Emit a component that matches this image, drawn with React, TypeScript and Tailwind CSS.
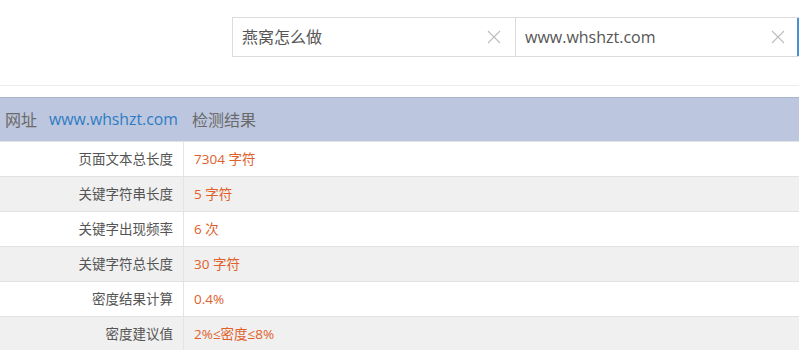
import React from "react";

const rows: [string, string][] = [
  ["页面文本总长度", "7304 字符"],
  ["关键字符串长度", "5 字符"],
  ["关键字出现频率", "6 次"],
  ["关键字符总长度", "30 字符"],
  ["密度结果计算", "0.4%"],
  ["密度建议值", "2%≤密度≤8%"],
];

function X() {
  return (
    <svg width="14" height="14" viewBox="0 0 14 14" className="shrink-0">
      <path d="M1 1L13 13M13 1L1 13" stroke="#bdbdbd" strokeWidth="1.1" />
    </svg>
  );
}

export default function App() {
  return (
    <div
      className="w-[799px] h-[350px] bg-white overflow-hidden"
      style={{ fontFamily: '"Segoe UI", "Open Sans", "Noto Sans CJK SC", sans-serif' }}
    >
      <div className="h-[86px] pt-[17px] pl-[232px] flex border-b border-[#ececec]">
        <div className="flex h-[40px] w-[567px] border border-[#dcdcdc] border-r-0">
          <div className="w-[283px] flex items-center justify-between pl-[9px] pr-[14px] border-r border-[#dcdcdc]">
            <span className="text-[16px] text-[#555]">燕窝怎么做</span>
            <X />
          </div>
          <div className="flex-1 flex items-center justify-between pl-[9px] pr-[12px] border-r-2 border-[#4a90d9]">
            <span className="text-[16px] text-[#555]">www.whshzt.com</span>
            <X />
          </div>
        </div>
      </div>
      <div className="h-[11px]" />
      <div className="h-[44px] bg-[#bcc6de] border-t border-[#aab4cc] flex items-center text-[16px] text-[#6a6a6a]">
        <span className="pl-[5px]">网址</span>
        <span className="ml-[12px] text-[15.8px] text-[#2e7cc4]">www.whshzt.com</span>
        <span className="ml-[14px]">检测结果</span>
      </div>
      {rows.map(([k, v], i) => (
        <div
          key={k}
          className={`flex h-[35px] border-t border-[#e2e2e2] text-[13.5px] ${i % 2 === 0 ? "bg-white" : "bg-[#f0f0f0]"}`}
        >
          <div className="w-[184px] shrink-0 border-r border-[#e4e4e4] flex items-center justify-end pr-[10px] text-[#555]">
            {k}
          </div>
          <div className="flex-1 flex items-center pl-[10px] text-[#e0602a]">{v}</div>
        </div>
      ))}
    </div>
  );
}
